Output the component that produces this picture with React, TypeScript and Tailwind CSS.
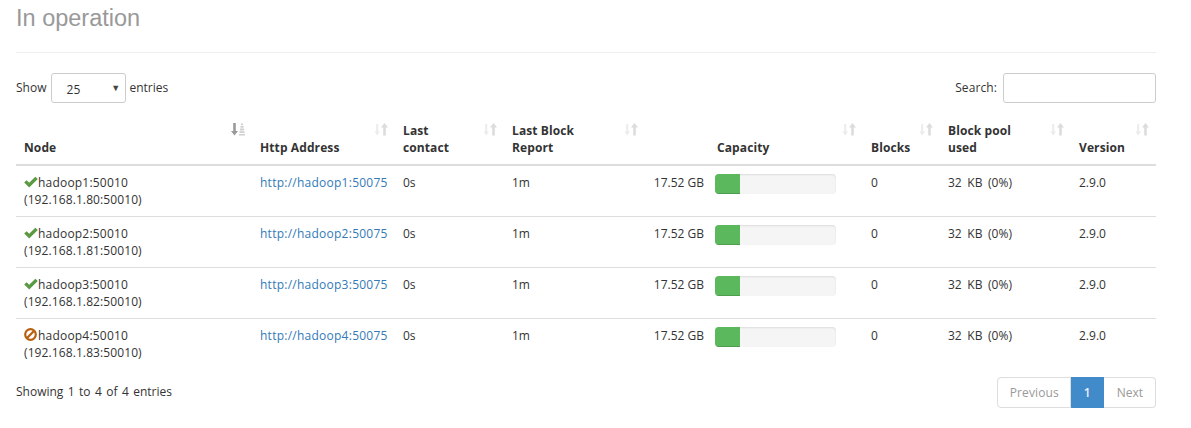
const rows = [
  { name: 'hadoop1', ip: '192.168.1.80', ok: true },
  { name: 'hadoop2', ip: '192.168.1.81', ok: true },
  { name: 'hadoop3', ip: '192.168.1.82', ok: true },
  { name: 'hadoop4', ip: '192.168.1.83', ok: false },
];

function SortIcon({ active }: { active?: boolean }) {
  return (
    <svg
      viewBox="0 0 14 13"
      className="absolute right-[7px] top-[9px] h-[13px] w-[14px]"
      aria-hidden="true"
    >
      {active ? (
        <>
          <path d="M2.200 0h2.600v8H7L3.500 12.500 0 8h2.200z" fill="#9a9a9a" />
          <path d="M8 11h6v1.500H8zM8.500 8.300h5v1.800h-5zM9 5.600h4v1.800H9zM9.500 3h3v1.800h-3zM10 .5h2v1.700h-2z" fill="#d0d0d0" />
        </>
      ) : (
        <>
          <path d="M2.200 1h2v7.500H6L3.200 12.500.4 8.500h1.800z" fill="#ececec" />
          <path d="M10.500 0 14 4.500h-2.200V12.500H9.200V4.500H7z" fill="#dcdcdc" />
        </>
      )}
    </svg>
  );
}

function Th({ children, width, className = '', active }: { children?: React.ReactNode; width: number; className?: string; active?: boolean }) {
  return (
    <th
      style={{ width }}
      className={`relative border-b-2 border-[#ddd] px-2 pt-[8px] pb-[8px] text-left align-bottom text-[12px] leading-[17px] font-bold tracking-[0.1px] text-[#333] ${className}`}
    >
      {children}
      <SortIcon active={active} />
    </th>
  );
}

function Status({ ok }: { ok: boolean }) {
  if (ok) {
    return (
      <svg viewBox="0 0 14 12" className="relative -top-[2px] inline-block h-[12px] w-[14px]" aria-hidden="true">
        <path d="M.2 6.600 2.600 4.200 5.200 6.800 11.300.7 13.800 3.100 5.200 11.600z" fill="#5b9a42" />
      </svg>
    );
  }
  return (
    <svg viewBox="0 0 13 13" className="relative -top-[3px] mr-[1px] -mb-[1px] inline-block h-[13px] w-[13px]" aria-hidden="true">
      <circle cx="6.500" cy="6.500" r="5.300" fill="none" stroke="#b9600f" strokeWidth="2.200" />
      <path d="M2.800 10.200 10.200 2.800" stroke="#b9600f" strokeWidth="2.200" />
    </svg>
  );
}

export default function App() {
  return (
    <div className="min-h-[428px] bg-white px-4 font-['Open_Sans','Noto_Sans',sans-serif] text-[12px] leading-[17px] text-[#333]">
      <h2 className="font-['Liberation_Sans',sans-serif] pt-[4px] text-[23.5px] leading-[29px] font-normal text-[#999]">In operation</h2>
      <div className="mt-[19px] w-[1140px] border-t border-[#eee]" />

      <div className="mt-[20px] flex w-[1140px] items-center justify-between">
        <div className="flex items-center">
          <span className="pb-[2px]">Show</span>
          <div className="relative mr-[3px] ml-[5px] h-[30px] w-[75px] rounded-[3px] border border-[#ccc] pt-[7px] pl-[14px] tracking-[0.2px]">
            25
            <span className="absolute top-[9px] right-[5px] text-[9px] leading-[10px] text-[#444]">▼</span>
          </div>
          <span className="pb-[2px]">entries</span>
        </div>
        <div className="flex items-center">
          <span className="pb-[2px] tracking-[0.1px]">Search:</span>
          <div className="ml-[6px] h-[30px] w-[153px] rounded-[3px] border border-[#ccc]" />
        </div>
      </div>

      <table className="mt-[11px] w-[1140px] table-fixed border-collapse">
        <thead>
          <tr>
            <Th width={236} active>Node</Th>
            <Th width={143}>Http Address</Th>
            <Th width={109}>Last<br />contact</Th>
            <Th width={141}>Last Block<br />Report</Th>
            <Th width={218} className="!pl-[72px]">Capacity</Th>
            <Th width={77}>Blocks</Th>
            <Th width={131}>Block pool<br />used</Th>
            <Th width={85}>Version</Th>
          </tr>
        </thead>
        <tbody>
          {rows.map((r, i) => (
            <tr key={r.name} className={i < 3 ? 'border-b border-[#ddd]' : ''}>
              <td className="h-[51px] px-2 pt-[8px] pb-[8px] align-top">
                <span className="tracking-[0.2px]">
                  <Status ok={r.ok} />
                  {r.name}:50010
                </span>
                <br />
                <span className="tracking-[0.1px]">({r.ip}:50010)</span>
              </td>
              <td className="px-2 pt-[8px] align-top">
                <a className="tracking-[0.25px] text-[#337ab7]">http://{r.name}:50075</a>
              </td>
              <td className="px-2 pt-[8px] align-top">0s</td>
              <td className="px-2 pt-[8px] align-top">1m</td>
              <td className="px-2 pt-[8px] align-top">
                <div className="flex items-start">
                  <div className="w-[51px] text-right whitespace-nowrap">17.52 GB</div>
                  <div className="ml-[11px] h-[20px] w-[121px] overflow-hidden rounded-[4px] bg-[#f5f5f5] shadow-[inset_0_1px_2px_rgba(0,0,0,0.1)]">
                    <div className="h-full w-[25px] bg-[#5cb85c] shadow-[inset_0_-1px_0_rgba(0,0,0,0.15)]" />
                  </div>
                </div>
              </td>
              <td className="px-2 pt-[8px] align-top">0</td>
              <td className="px-2 pt-[8px] align-top [word-spacing:2.500px]">32 KB (0%)</td>
              <td className="px-2 pt-[8px] align-top">2.9.0</td>
            </tr>
          ))}
        </tbody>
      </table>

      <div className="mt-[7px] flex w-[1140px] items-start justify-between">
        <div className="pt-[6px] [word-spacing:1.300px]">Showing 1 to 4 of 4 entries</div>
        <div className="flex h-[31px] text-[12px] leading-[29px]">
          <div className="rounded-l-[4px] border border-[#ddd] pr-[11px] pl-[12px] tracking-[0.1px] text-[#999]">Previous</div>
          <div className="border border-[#428bca] bg-[#428bca] px-[12px] font-semibold text-[#eef]">1</div>
          <div className="rounded-r-[4px] border border-l-0 border-[#ddd] pr-[12px] pl-[13px] text-[#999]">Next</div>
        </div>
      </div>
    </div>
  );
}
